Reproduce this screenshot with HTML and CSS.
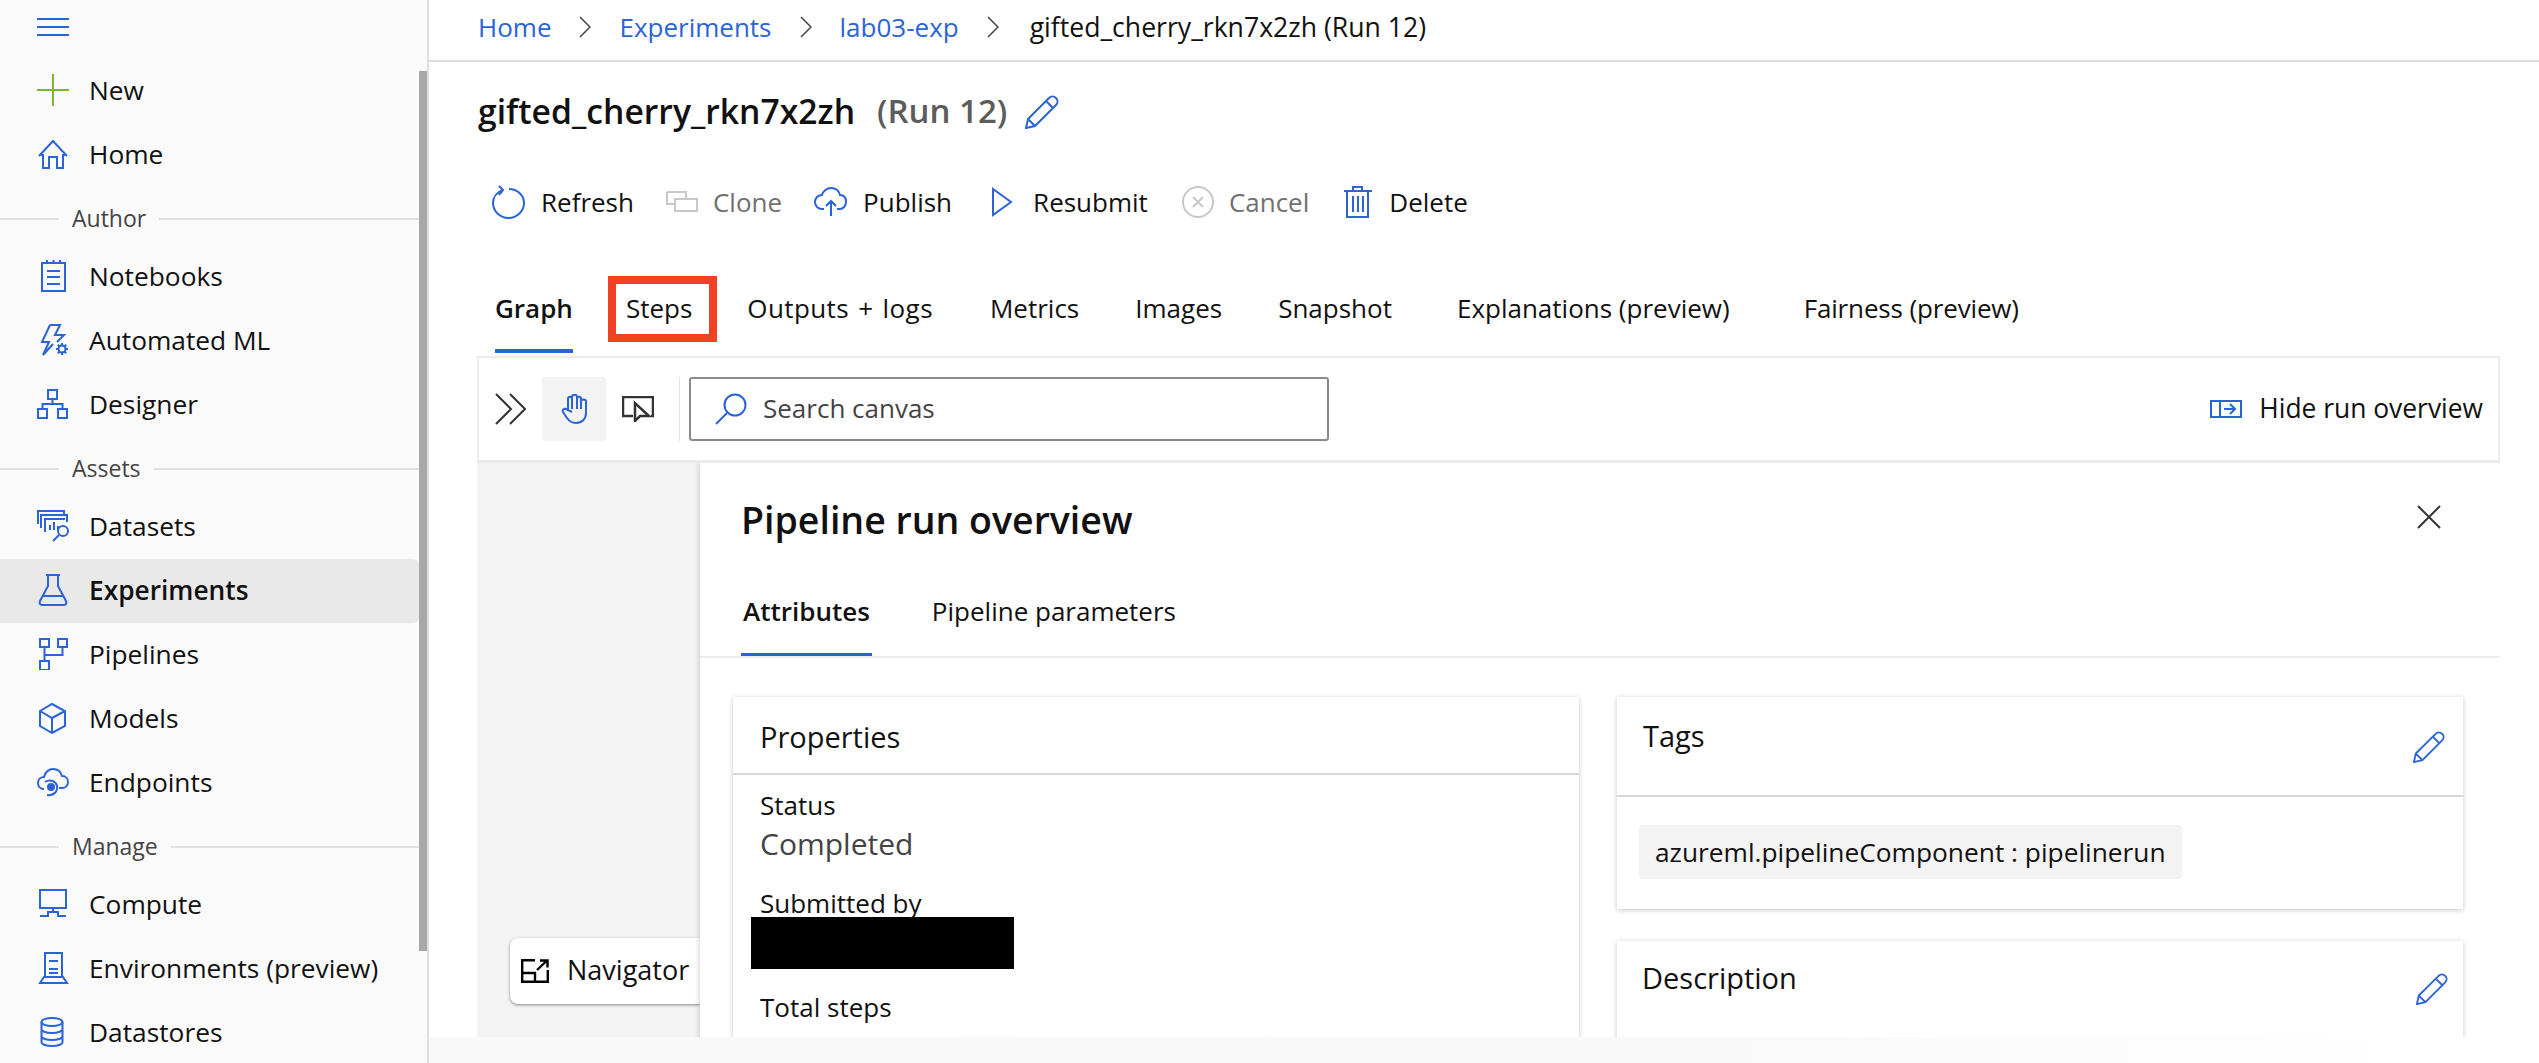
FILE: index.html
```html
<!DOCTYPE html>
<html lang="en">
  <head>
    <meta charset="UTF-8" />
    <title>gifted_cherry_rkn7x2zh (Run 12)</title>
    <link rel="stylesheet" href="styles.css">
  </head>
  <body>
    <aside class="sidebar">
      <nav class="nav">
        <div class="nav-top">
          <svg class="ico" width="32" height="18" viewBox="0 0 32 18"><path d="M0 1h32M0 9h32M0 17h32"/></svg>
        </div>
        <a class="nav-item"><span class="nav-icon"><svg class="ico ico-green" width="32" height="32" viewBox="0 0 32 32"><path d="M16 0v32M0 16h32"/></svg></span>New</a>
        <a class="nav-item"><span class="nav-icon"><svg class="ico" width="32" height="30" viewBox="0 0 32 30"><path d="M2 17 16 2l14 15M4 16h2v13h6V18h8v11h6V16h2"/></svg></span>Home</a>

        <div class="nav-group"><span>Author</span></div>
        <a class="nav-item"><span class="nav-icon"><svg class="ico" width="32" height="32" viewBox="0 0 32 32"><path d="M5 3h23v28H5zM10 0v3M16.500 0v3M23 0v3M10 11h13M10 17h13M10 24h13"/></svg></span>Notebooks</a>
        <a class="nav-item"><span class="nav-icon"><svg class="ico" width="32" height="32" viewBox="0 0 32 32"><path d="M13 1 5 18h7L6 31l10-11M13 1h10l-5 10h9l-7 7"/><circle cx="25" cy="25" r="3.500"/><path d="M25 19v2.500M25 28.500V31M19 25h2.500M28.500 25H31M20.800 20.800l1.700 1.700M27.500 27.500l1.700 1.700M29.200 20.800l-1.700 1.700M22.500 27.500l-1.700 1.700"/></svg></span>Automated ML</a>
        <a class="nav-item"><span class="nav-icon"><svg class="ico" width="32" height="30" viewBox="0 0 32 30"><path d="M11 1h9v9h-9zM1 20h9v9H1zM21 20h9v9h-9zM15.500 10v5M5.500 20v-5h20v5"/></svg></span>Designer</a>

        <div class="nav-group"><span>Assets</span></div>
        <a class="nav-item"><span class="nav-icon"><svg class="ico" width="32" height="32" viewBox="0 0 32 32"><path d="M1 14V1h26v5M4 18V5h26v7M8 22V9h20M13 20v-5M17 20v-8M21 20v-4"/><circle cx="26" cy="21" r="5"/><path d="m22 25-6 6"/></svg></span>Datasets</a>
        <a class="nav-item nav-item-active"><span class="nav-icon"><svg class="ico" width="32" height="32" viewBox="0 0 32 32"><path d="M9 1h14M11 1v11L3 27c-1 2 0 4 2 4h22c2 0 3-2 2-4l-8-15V1M6 22h20"/></svg></span>Experiments</a>
        <a class="nav-item"><span class="nav-icon"><svg class="ico" width="32" height="32" viewBox="0 0 32 32"><path d="M3 1h9v8H3zM21 1h9v8h-9zM3 23h9v9H3zM7.500 9v14M7.500 17h18V9"/></svg></span>Pipelines</a>
        <a class="nav-item"><span class="nav-icon"><svg class="ico" width="32" height="32" viewBox="0 0 32 32"><path d="M15 2 28 9v15l-13 7-12-7V9zM3 9l12 7 13-7M15 16v15"/></svg></span>Models</a>
        <a class="nav-item"><span class="nav-icon"><svg class="ico" width="32" height="30" viewBox="0 0 32 30"><path d="M7 22c-4 0-6-3-6-6 0-4 3-6 6-6 1-5 5-8 9-8 5 0 8 3 9 7 4 0 6 3 6 6 0 4-3 6-6 6h-3M8 15c5-3 11-1 12 4 1 6-4 10-10 9"/><circle cx="14" cy="20" r="3" class="ico-fill"/></svg></span>Endpoints</a>

        <div class="nav-group nav-group-manage"><span>Manage</span></div>
        <a class="nav-item"><span class="nav-icon"><svg class="ico" width="32" height="30" viewBox="0 0 32 30"><path d="M3 1h26v18H3zM16 19v4M11 28v-5h10v5M3 27h8M21 27h8"/></svg></span>Compute</a>
        <a class="nav-item"><span class="nav-icon"><svg class="ico" width="32" height="32" viewBox="0 0 32 32"><path d="M8 25V1h17v24M3 31l4-6h19l4 6zM12 9h9M12 17h9M12 21h9"/></svg></span>Environments (preview)</a>
        <a class="nav-item"><span class="nav-icon"><svg class="ico" width="32" height="30" viewBox="0 0 32 30"><ellipse cx="15" cy="5" rx="10.500" ry="4"/><path d="M4.500 5v20c0 2 4 4 10.500 4s10.500-2 10.500-4V5M4.500 12c0 2 4 4 10.500 4s10.500-2 10.500-4M4.500 19c0 2 4 4 10.500 4s10.500-2 10.500-4"/></svg></span>Datastores</a>
      </nav>
      <div class="scroll-track"><div class="scroll-thumb"></div></div>
    </aside>

    <main class="main">
      <div class="crumbs">
        <a class="crumb-link">Home</a>
        <svg class="chev" width="12" height="22" viewBox="0 0 12 22"><path d="m1 1 10 10L1 21"/></svg>
        <a class="crumb-link">Experiments</a>
        <svg class="chev" width="12" height="22" viewBox="0 0 12 22"><path d="m1 1 10 10L1 21"/></svg>
        <a class="crumb-link">lab03-exp</a>
        <svg class="chev" width="12" height="22" viewBox="0 0 12 22"><path d="m1 1 10 10L1 21"/></svg>
        <span class="crumb-current">gifted_cherry_rkn7x2zh (Run 12)</span>
      </div>

      <div class="content">
        <div class="title-row">
          <h1 class="title">gifted_cherry_rkn7x2zh</h1>
          <span class="title-run">(Run 12)</span>
          <svg class="ico" width="34" height="34" viewBox="0 0 34 34"><path d="M1 33l2-9L24 3c2-2 5-2 7 0s2 5 0 7L10 31zM3 24l7 7M21 6l7 7"/></svg>
        </div>

        <div class="actions">
          <button class="action action-refresh"><svg class="ico" width="33" height="34" viewBox="0 0 33 34"><path d="M11 5C5 7 1 12 1 18c0 8 7 15 15.500 15S32 26 32 18 25 4 17 4M7 1l4 4-4 5"/></svg>Refresh</button>
          <button class="action action-off action-clone"><svg class="ico ico-off" width="32" height="22" viewBox="0 0 32 22"><path d="M1 1h19v6M1 1v12h8M9 8h22v12H9z"/></svg>Clone</button>
          <button class="action"><svg class="ico" width="33" height="30" viewBox="0 0 33 30"><path d="M10 22H8c-4 0-7-3-7-7s3-7 7-7c1-4 5-7 9-7 5 0 8 3 9 7 4 0 6 3 6 7s-3 7-6 7h-3M17 29V14M12 19l5-5 5 5"/></svg>Publish</button>
          <button class="action action-resubmit"><svg class="ico" width="22" height="30" viewBox="0 0 22 30"><path d="M2 2 20 15 2 28z"/></svg>Resubmit</button>
          <button class="action action-off action-cancel"><svg class="ico ico-off" width="32" height="32" viewBox="0 0 32 32"><circle cx="16" cy="16" r="15"/><path d="m11 11 10 10M21 11 11 21"/></svg>Cancel</button>
          <button class="action action-delete"><svg class="ico" width="28" height="32" viewBox="0 0 28 32"><path d="M0 5h28M9 5V1h9v4M3 5v26h21V5M9 10v16M14 10v16M19 10v16"/></svg>Delete</button>
        </div>

        <div class="tabs">
          <a class="tab tab-on">Graph</a>
          <a class="tab tab-steps">Steps<span class="red-box"></span></a>
          <a class="tab tab-outputs">Outputs + logs</a>
          <a class="tab">Metrics</a>
          <a class="tab tab-images">Images</a>
          <a class="tab tab-snapshot">Snapshot</a>
          <a class="tab tab-expl">Explanations (preview)</a>
          <a class="tab tab-fair">Fairness (preview)</a>
        </div>

        <div class="canvas-bar">
          <svg class="ico ico-dark chevs" width="32" height="32" viewBox="0 0 32 32"><path d="m1 1 15 15L1 31M15 1l15 15-15 15"/></svg>
          <span class="tool tool-on"><svg class="ico" width="26" height="30" viewBox="0 0 26 30"><path d="M7 17V5c0-3 4-3 4 0V3c0-3 5-3 5 0v2c0-3 4-3 4 0v2c0-2 5-2 5 0v12c0 6-4 10-10 10-4 0-7-2-9-5l-4-6c-1-2 1-4 3-3l6 3M11 5v10M16 3v12M20 5v10"/></svg></span>
          <span class="tool"><svg class="ico ico-cursor" width="32" height="26" viewBox="0 0 32 26"><path d="M11 20H1V1h30v19h-2M13 7v18l5-5h9z"/></svg></span>
          <span class="bar-sep"></span>
          <div class="search">
            <svg class="ico" width="32" height="32" viewBox="0 0 32 32"><circle cx="20" cy="12" r="10.500"/><path d="M12 20 1 31"/></svg>
            <span class="bar-text">Search canvas</span>
          </div>
          <div class="hide-run">
            <svg class="ico" width="32" height="18" viewBox="0 0 32 18"><path d="M1 1h30v16H1zM10 1v16M14 9h11M20 4l5 5-5 5"/></svg>
            <span class="bar-text">Hide run overview</span>
          </div>
        </div>

        <div class="canvas">
          <div class="canvas-empty">
            <div class="navigator">
              <svg class="ico ico-nav" width="28" height="24" viewBox="0 0 28 24"><path d="M14 1.200H1.200v21.600h25.600V11M1.200 14H14v8.800M16 11 26 1.500M19 1.500h7.500v7"/></svg>
              <span class="bar-text">Navigator</span>
            </div>
          </div>

          <section class="overview">
            <div class="overview-head">
              <h2 class="overview-title">Pipeline run overview</h2>
              <svg class="ico ico-dark" width="24" height="24" viewBox="0 0 24 24"><path d="m1 1 22 22M23 1 1 23"/></svg>
            </div>
            <div class="sub-tabs">
              <a class="sub-tab sub-tab-on">Attributes</a>
              <a class="sub-tab">Pipeline parameters</a>
            </div>

            <div class="cards">
              <div class="card card-props">
                <h3 class="card-title card-title-props">Properties</h3>
                <div class="props">
                  <div class="prop-label">Status</div>
                  <div class="prop-value">Completed</div>
                  <div class="prop-label prop-submitted">Submitted by</div>
                  <div class="redacted"></div>
                  <div class="prop-label prop-steps">Total steps</div>
                </div>
              </div>

              <div class="card-col">
                <div class="card card-tags">
                  <div class="card-head">
                    <h3 class="card-title">Tags</h3>
                    <svg class="ico" width="32" height="32" viewBox="0 0 34 34"><path d="M1 33l2-9L24 3c2-2 5-2 7 0s2 5 0 7L10 31zM3 24l7 7M21 6l7 7"/></svg>
                  </div>
                  <div class="chip">azureml.pipelineComponent : pipelinerun</div>
                </div>
                <div class="card card-desc">
                  <div class="card-head card-head-desc">
                    <h3 class="card-title">Description</h3>
                    <svg class="ico" width="32" height="32" viewBox="0 0 34 34"><path d="M1 33l2-9L24 3c2-2 5-2 7 0s2 5 0 7L10 31zM3 24l7 7M21 6l7 7"/></svg>
                  </div>
                </div>
              </div>
            </div>
          </section>
        </div>
      </div>
    </main>

    <div class="bottom-fade"></div>
  </body>
</html>
```

FILE: styles.css
```css
* {
  box-sizing: border-box;
}
html,
body {
  margin: 0;
  height: 100%;
  overflow: hidden;
}
body {
  display: flex;
  font-family: "Open Sans", "Noto Sans", sans-serif;
  font-size: 26px;
  color: #111;
  background-color: #fff;
}
h1,
h2,
h3 {
  margin: 0;
  font-weight: 400;
}

/* icons */
.ico {
  display: block;
  flex: none;
  fill: none;
  stroke: #2b63d9;
  stroke-width: 2;
}
.ico-green {
  stroke: #7db62e;
}
.ico-dark {
  stroke: #333;
}
.ico-cursor {
  stroke: #333;
  stroke-width: 2.5;
}
.ico-nav {
  stroke: #000;
  stroke-width: 2.4;
}
.ico-off {
  stroke: #c8c8c8;
}
.ico-fill {
  fill: #2b63d9;
}

/* left nav */
.sidebar {
  display: flex;
  flex: none;
  width: 429px;
  height: 100%;
  overflow: hidden;
  background-color: #fafafa;
  border-right: 2px solid #dedede;
}
.nav {
  flex: none;
  width: 419px;
  height: 100%;
  overflow: hidden;
  font-size: 26.3px;
}
.nav-top {
  height: 59px;
  padding: 18px 0 0 37px;
}
.nav-item {
  display: flex;
  align-items: center;
  height: 64px;
  padding: 0 0 2px 37px;
  border-radius: 0 6px 6px 0;
  white-space: nowrap;
}
.nav-item-active {
  background-color: #e9e9e9;
  font-weight: 600;
}
.nav-icon {
  display: flex;
  justify-content: center;
  width: 32px;
  margin-right: 20px;
}
.nav-group {
  display: flex;
  align-items: center;
  height: 58px;
  padding-top: 5px;
  font-size: 23px;
  color: #444;
}
.nav-group span {
  padding: 0 13px 2px;
}
.nav-group::before,
.nav-group::after {
  content: "";
  height: 2px;
  background-color: #e1e1e1;
}
.nav-group::before {
  width: 59px;
}
.nav-group::after {
  flex: 1;
}
.scroll-track {
  flex: 1;
}
.scroll-thumb {
  height: 880px;
  margin-top: 71px;
  background-color: #a8a8a8;
}

/* main area */
.main {
  flex: 1;
  min-width: 0;
  height: 100%;
  overflow: hidden;
}
.crumbs {
  display: flex;
  align-items: center;
  gap: 28px;
  height: 62px;
  padding: 0 0 6px 49px;
  border-bottom: 2px solid #dcdcdc;
  white-space: nowrap;
}
.crumb-link {
  color: #2b63d9;
}
.crumb-current {
  margin-left: 3px;
  font-size: 26.6px;
}
.chev {
  fill: none;
  stroke: #444;
  stroke-width: 1.500;
}
.content {
  padding: 0 39px 0 49px;
}
.title-row {
  display: flex;
  align-items: center;
  height: 100px;
}
.title {
  margin-bottom: 3px;
  font-size: 33.7px;
  font-weight: 600;
}
.title-run {
  margin: 0 18px 3px 22px;
  font-size: 33px;
  font-weight: 600;
  color: #5c5c5c;
}
.actions {
  display: flex;
  align-items: center;
  gap: 32px;
  height: 82px;
  padding-left: 14px;
}
.action {
  display: flex;
  align-items: center;
  gap: 16px;
  padding: 0 0 2px;
  border: none;
  background: none;
  font: inherit;
  color: inherit;
}
.action-off {
  color: #707070;
}
.action-clone {
  gap: 15px;
}
.action-resubmit {
  gap: 20px;
  margin-left: 7px;
}
.action-cancel {
  gap: 15px;
  margin-left: 2px;
}
.action-delete {
  gap: 17px;
  margin-left: 3px;
}
.tabs {
  display: flex;
  gap: 54px;
  height: 109px;
  margin-bottom: 3px;
  padding-left: 17px;
}
.tab {
  position: relative;
  height: 109px;
  padding-top: 44px;
  line-height: 40px;
  border-bottom: 4px solid transparent;
}
.tab-on {
  font-weight: 600;
  border-bottom-color: #2b63d9;
}
.tab-steps {
  margin-left: -1px;
}
.tab-outputs {
  margin: 0 3px 0 1px;
  letter-spacing: 0.4px;
  word-spacing: 2px;
}
.tab-images,
.tab-snapshot {
  margin-left: 2px;
}
.tab-expl {
  margin-left: 11px;
}
.tab-fair {
  margin-left: 20px;
  letter-spacing: -0.15px;
}
.red-box {
  position: absolute;
  top: 32px;
  left: -18px;
  right: -25px;
  height: 66px;
  border: 8px solid #f04124;
}
.canvas-bar {
  display: flex;
  align-items: center;
  height: 107px;
  margin-left: -1px;
  padding-left: 16px;
  border: 2px solid #ececec;
  border-bottom-width: 3px;
}
.bar-text {
  padding-bottom: 3px;
}
.chevs {
  margin-right: 15px;
}
.tool {
  display: flex;
  justify-content: center;
  align-items: center;
  width: 64px;
  height: 64px;
  border-radius: 3px;
}
.tool-on {
  margin-right: 16px;
  background-color: #f3f3f3;
}
.tool-on + .tool {
  width: 32px;
  margin-right: 25px;
}
.bar-sep {
  width: 1px;
  height: 64px;
  margin-right: 9px;
  background-color: #e3e3e3;
}
.search {
  display: flex;
  align-items: center;
  gap: 16px;
  width: 640px;
  height: 64px;
  padding-left: 24px;
  border: 2px solid #8a8a8a;
  border-radius: 3px;
  color: #444;
}
.hide-run {
  display: flex;
  align-items: center;
  gap: 17px;
  margin-left: auto;
  padding-right: 15px;
  font-size: 26.4px;
}
.canvas {
  display: flex;
  height: 600px;
  margin-left: -1px;
  overflow: hidden;
}
.canvas-empty {
  position: relative;
  flex: none;
  width: 223px;
  background-color: #f3f3f3;
}
.navigator {
  position: absolute;
  top: 475px;
  left: 33px;
  right: 0;
  display: flex;
  align-items: center;
  gap: 18px;
  height: 66px;
  padding-left: 11px;
  background-color: #fff;
  border-radius: 8px 0 0 8px;
  box-shadow: 0 1px 3px rgba(0, 0, 0, 0.45);
  font-size: 27px;
  white-space: nowrap;
}
.overview {
  position: relative;
  flex: 1;
  min-width: 0;
  background-color: #fff;
  box-shadow: -2px 0 4px rgba(0, 0, 0, 0.12);
}
.overview-head {
  display: flex;
  justify-content: space-between;
  align-items: flex-start;
  height: 112px;
  padding: 30px 59px 0 41px;
}
.overview-title {
  font-size: 37.5px;
  font-weight: 600;
  line-height: 54px;
}
.overview-head .ico {
  margin-top: 12px;
}
.sub-tabs {
  display: flex;
  gap: 58px;
  height: 83px;
  padding-left: 41px;
  border-bottom: 2px solid #ececec;
}
.sub-tab {
  height: 81px;
  padding: 16px 2px 0;
  line-height: 40px;
  border-bottom: 3px solid transparent;
}
.sub-tab-on {
  font-weight: 600;
  border-bottom-color: #2b63d9;
}
.cards {
  display: grid;
  grid-template-columns: 846px 846px;
  gap: 38px;
  padding: 39px 0 0 33px;
}
.card {
  background-color: #fff;
  box-shadow: 0 1px 5px rgba(0, 0, 0, 0.22);
}
.card-props {
  height: 500px;
}
.card-title {
  font-size: 29px;
  line-height: 40px;
}
.card-title-props {
  height: 78px;
  padding: 20px 0 0 27px;
  border-bottom: 2px solid #d8d8d8;
}
.props {
  padding: 10px 0 0 27px;
}
.prop-label {
  line-height: 40px;
}
.prop-value {
  font-size: 30px;
  line-height: 38px;
  color: #444;
}
.prop-submitted {
  height: 34px;
  margin-top: 20px;
}
.redacted {
  width: 263px;
  height: 52px;
  margin-left: -9px;
  background-color: #000;
}
.prop-steps {
  margin-top: 18px;
}
.card-col {
  display: flex;
  flex-direction: column;
  gap: 32px;
}
.card-tags {
  height: 212px;
}
.card-desc {
  height: 300px;
}
.card-head {
  display: flex;
  justify-content: space-between;
  height: 100px;
  padding: 19px 18px 0 26px;
  border-bottom: 2px solid #d8d8d8;
}
.card-head .ico {
  margin-top: 15px;
}
.card-head-desc {
  padding: 17px 15px 0 25px;
  border-bottom: none;
}
.chip {
  display: inline-block;
  margin: 28px 0 0 22px;
  padding: 0 16px;
  font-size: 26.3px;
  line-height: 54px;
  background-color: #f3f3f3;
  border-radius: 4px;
}
.bottom-fade {
  position: absolute;
  left: 429px;
  right: 0;
  bottom: 0;
  height: 26px;
  background: linear-gradient(to right, #f8f8f8, #f9f9f9 60%, #fff 95%);
}
```
